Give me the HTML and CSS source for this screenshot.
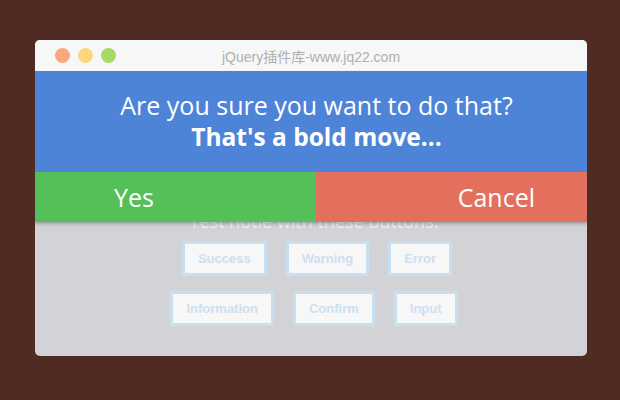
FILE: index.html
```html
<!DOCTYPE html>
<html>
<head>
    <title>notie demo</title>
    <link rel="stylesheet" href="styles.css">
</head>
<body>
    <div class="window">
        <div class="titlebar">
            <div class="dots">
                <span class="dot dot-red"></span>
                <span class="dot dot-yellow"></span>
                <span class="dot dot-green"></span>
            </div>
            <div class="title">jQuery插件库-www.jq22.com</div>
        </div>
        <div class="content">
            <p class="intro">Test notie with these buttons.</p>
            <div class="button-row row-first">
                <button class="demo-button">Success</button>
                <button class="demo-button">Warning</button>
                <button class="demo-button">Error</button>
            </div>
            <div class="button-row">
                <button class="demo-button">Information</button>
                <button class="demo-button">Confirm</button>
                <button class="demo-button">Input</button>
            </div>

            <div class="notie-confirm">
                <div class="notie-text">
                    Are you sure you want to do that?<br>
                    <b>That's a bold move...</b>
                </div>
                <div class="notie-choices">
                    <div class="choice choice-yes">Yes</div>
                    <div class="choice choice-no">Cancel</div>
                </div>
            </div>
        </div>
    </div>
</body>
</html>
```

FILE: styles.css
```css
body {
    margin: 0;
    padding: 40px 33px 0 35px;
    background-color: #4f2b24;
    font-family: "Open Sans", "Noto Sans", sans-serif;
}
.window {
    width: 552px;
    height: 316px;
    border-radius: 5px;
    overflow: hidden;
    background-color: #d3d2d6;
    display: flex;
    flex-direction: column;
}
.titlebar {
    height: 31px;
    flex: none;
    background-color: #f7f7f7;
    position: relative;
    display: flex;
    align-items: center;
    justify-content: center;
}
.dots {
    position: absolute;
    left: 20px;
    top: 8px;
    display: flex;
    gap: 8px;
}
.dot {
    width: 15px;
    height: 15px;
    border-radius: 50%;
}
.dot-red {
    background-color: #f9a77b;
}
.dot-yellow {
    background-color: #f8d77d;
}
.dot-green {
    background-color: #a8d868;
}
.title {
    font-family: "Liberation Sans", "Noto Sans CJK SC", sans-serif;
    font-size: 14px;
    color: #afafaf;
    margin-top: 1px;
}
.content {
    position: relative;
    flex: 1;
    padding-left: 6px;
    display: flex;
    flex-direction: column;
    align-items: center;
}
.intro {
    margin: 139px 0 9px;
    font-size: 18px;
    line-height: 22px;
    color: #eeeef0;
}
.button-row {
    display: flex;
    gap: 19px;
    margin-bottom: 15px;
}
.row-first {
    margin-left: 6px;
}
.demo-button {
    font-family: "Liberation Sans", Arial, sans-serif;
    font-weight: bold;
    font-size: 13px;
    line-height: 15px;
    color: #cde0f0;
    background-color: #f7f7f7;
    border: 3px solid #c8dff0;
    padding: 7px 13px;
}
.notie-confirm {
    position: absolute;
    top: 0;
    left: 0;
    right: 0;
    box-shadow: 0 2px 3px rgba(0, 0, 0, 0.25);
}
.notie-text {
    height: 101px;
    box-sizing: border-box;
    padding: 19px 0 0 11px;
    background-color: #4e84d8;
    color: #ffffff;
    text-align: center;
    font-size: 25px;
    line-height: 31px;
}
.notie-text b {
    font-size: 24.5px;
}
.notie-choices {
    display: flex;
    height: 50px;
}
.choice {
    color: #ffffff;
    font-size: 25px;
    line-height: 50px;
}
.choice-yes {
    width: 281px;
    box-sizing: border-box;
    padding-left: 79px;
    background-color: #55bf5a;
}
.choice-no {
    flex: 1;
    padding-right: 52px;
    text-align: right;
    background-color: #e3705c;
}
```
